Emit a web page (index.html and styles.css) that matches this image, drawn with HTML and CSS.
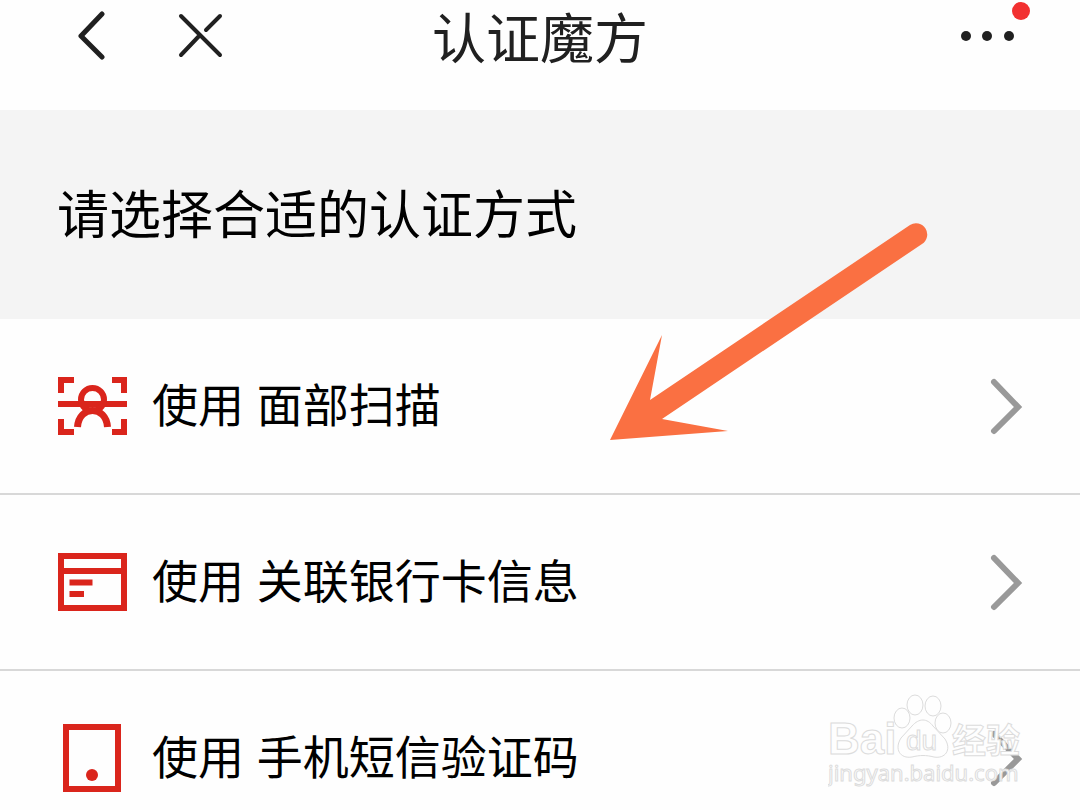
FILE: index.html
```
<!DOCTYPE html>
<html lang="zh-CN">
<head>
    <meta charset="UTF-8">
    <meta name="viewport" content="width=device-width, initial-scale=1.0">
    <title>认证魔方</title>
    <link rel="stylesheet" href="styles.css">
</head>
<body>
    <header class="navbar">
        <div class="nav-left">
            <button type="button" class="icon-btn" aria-label="返回">
                <svg width="50" height="50" viewBox="0 0 50 50"><path d="M37 3 L16 25 L37 46" class="back-line"/></svg>
            </button>
            <button type="button" class="icon-btn" aria-label="关闭">
                <svg width="50" height="50" viewBox="0 0 50 50"><path d="M6 5 L45 44 M45 5 L31 19 M25 24 L6 44" class="close-line"/></svg>
            </button>
        </div>
        <h1 class="title">认证魔方</h1>
        <div class="nav-right">
            <button type="button" class="icon-btn more" aria-label="更多">
                <svg width="58" height="50" viewBox="0 0 58 50">
                    <circle cx="9" cy="25" r="5"/>
                    <circle cx="30" cy="25" r="5"/>
                    <circle cx="52" cy="25" r="5"/>
                </svg>
                <span class="dot"></span>
            </button>
        </div>
    </header>

    <main>
        <div class="prompt">
            <h2>请选择合适的认证方式</h2>
        </div>

        <div class="methods">
            <button type="button" class="method">
                <svg class="method-icon" width="70" height="70" viewBox="0 0 70 70">
                    <g fill="none" stroke="#da251c" stroke-width="6">
                        <path d="M3 22 V9 H16 M54 9 H66 V22 M66 48 V61 H54 M16 61 H3 V48"/>
                        <path d="M0 33 H69"/>
                        <circle cx="34.5" cy="28.5" r="11.5"/>
                        <path d="M19.5 56 C21 34 48 34 49.5 56" stroke-width="7"/>
                    </g>
                </svg>
                <span class="method-name">使用 面部扫描</span>
                <svg class="chevron" width="34" height="58" viewBox="0 0 34 58"><path d="M5 5 L29 30 L5 54"/></svg>
            </button>
            <button type="button" class="method">
                <svg class="method-icon" width="70" height="70" viewBox="0 0 70 70">
                    <rect x="3" y="9" width="63" height="52" fill="none" stroke="#da251c" stroke-width="6"/>
                    <path d="M3 24 H66 M11.5 35.5 H34.5 M11.5 47 H26" stroke="#da251c" stroke-width="6"/>
                </svg>
                <span class="method-name">使用 关联银行卡信息</span>
                <svg class="chevron" width="34" height="58" viewBox="0 0 34 58"><path d="M5 5 L29 30 L5 54"/></svg>
            </button>
            <button type="button" class="method">
                <svg class="method-icon" width="70" height="70" viewBox="0 0 70 70">
                    <rect x="8" y="4" width="52" height="62" fill="none" stroke="#da251c" stroke-width="6"/>
                    <circle cx="34" cy="52" r="6" fill="#da251c"/>
                </svg>
                <span class="method-name">使用 手机短信验证码</span>
                <svg class="chevron" width="34" height="58" viewBox="0 0 34 58"><path d="M5 5 L29 30 L5 54"/></svg>
            </button>
        </div>
    </main>

    <!-- pointer to the face scan option -->
    <svg class="arrow" width="320" height="220" viewBox="0 0 320 220" aria-hidden="true">
        <path d="M0 220 L52 115 L40 180 L300 5 A11 11 0 0 1 312 24 L52 199 L118 211 Z" fill="#fa7042"/>
    </svg>

    <svg class="watermark" width="200" height="100" viewBox="0 0 200 100" aria-hidden="true">
        <g class="mark">
            <text x="0" y="61" class="mark-bai">Bai</text>
            <ellipse cx="74" cy="25" rx="8" ry="10"/>
            <ellipse cx="87" cy="12" rx="8" ry="10"/>
            <ellipse cx="105" cy="13" rx="8" ry="10"/>
            <ellipse cx="115" cy="30" rx="8" ry="10"/>
            <path d="M84 33 C91 25 99 25 105 33 L117 46 C124 57 117 66 106 64 C98 62 92 62 84 64 C72 66 66 56 73 45 Z"/>
            <text x="78" y="57" class="mark-du">du</text>
            <text x="124" y="60" class="mark-cn">经验</text>
            <text x="0" y="88" class="mark-url">jingyan.baidu.com</text>
        </g>
    </svg>
</body>
</html>
```
FILE: styles.css
```
* {
    box-sizing: border-box;
}
body {
    position: relative;
    height: 100vh;
    margin: 0;
    overflow: hidden;
    background-color: #fefefe;
    color: #000;
    font-family: "Liberation Sans", "Noto Sans CJK SC", sans-serif;
}
button {
    padding: 0;
    border: none;
    background: none;
    color: inherit;
    font-family: inherit;
    cursor: pointer;
}
svg {
    display: block;
}
.navbar {
    display: grid;
    grid-template-columns: 1fr auto 1fr;
    align-items: start;
    height: 110px;
    padding: 0 65px;
}
.nav-left {
    display: flex;
    gap: 60px;
    padding-top: 11px;
}
.nav-right {
    display: flex;
    justify-content: flex-end;
    padding-top: 11px;
}
.back-line,
.close-line {
    fill: none;
    stroke: #202020;
    stroke-width: 5;
    stroke-linecap: round;
    stroke-linejoin: round;
}
.close-line {
    stroke-width: 4;
}
.title {
    margin: 0;
    color: #202020;
    font-size: 54px;
    font-weight: normal;
    line-height: 80px;
}
.more {
    position: relative;
    fill: #202020;
}
.dot {
    position: absolute;
    top: -9px;
    right: -15px;
    width: 18px;
    height: 18px;
    border-radius: 50%;
    background-color: #f23030;
}
.prompt {
    padding: 66px 57px 63px;
    background-color: #f4f4f4;
}
.prompt h2 {
    margin: 0;
    font-size: 52px;
    font-weight: normal;
    line-height: 80px;
}
.method {
    display: flex;
    align-items: center;
    width: 100%;
    height: 176px;
    padding: 0 57px 0 58px;
    border-bottom: 2px solid #d8d8d8;
    text-align: left;
}
.method-icon {
    flex: none;
    margin-right: 24px;
}
.method-name {
    flex: 1;
    font-size: 46px;
    line-height: 70px;
}
.chevron {
    flex: none;
    fill: none;
    stroke: #999;
    stroke-width: 6;
    stroke-linecap: round;
}
.arrow {
    position: absolute;
    top: 220px;
    left: 610px;
}
.watermark {
    position: absolute;
    right: 52px;
    bottom: 17px;
}
.mark {
    fill: #fefefe;
    stroke: #dcdcdc;
    stroke-width: 1;
}
.mark-bai {
    font-size: 44px;
    font-weight: bold;
}
.mark-du {
    font-size: 28px;
}
.mark-cn {
    font-size: 34px;
    font-weight: bold;
}
.mark-url {
    font-family: "Noto Sans", sans-serif;
    font-size: 22px;
}
```
